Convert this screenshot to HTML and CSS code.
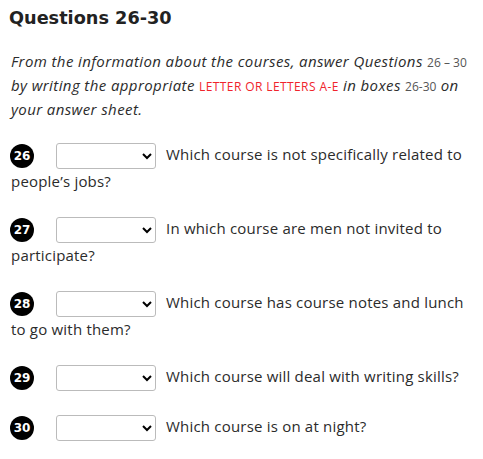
FILE: index.html
```html
<!DOCTYPE html>
<html>
<head>
<meta charset="utf-8">
<link rel="stylesheet" href="styles.css">
</head>
<body>
<h2 class="title">Questions 26-30</h2>
<p class="intro">From the information about the courses, answer Questions <span class="num">26 – 30</span> by writing the appropriate <span class="red">LETTER OR LETTERS A-E</span> in boxes <span class="num">26-30</span> on your answer sheet.</p>
<div class="q"><span class="badge">26</span><select class="sel"><option></option></select>Which course is not specifically related to people’s jobs?</div>
<div class="q"><span class="badge">27</span><select class="sel"><option></option></select>In which course are men not invited to participate?</div>
<div class="q"><span class="badge">28</span><select class="sel"><option></option></select>Which course has course notes and lunch to go with them?</div>
<div class="q"><span class="badge">29</span><select class="sel"><option></option></select>Which course will deal with writing skills?</div>
<div class="q"><span class="badge">30</span><select class="sel"><option></option></select>Which course is on at night?</div>
</body>
</html>
```
FILE: styles.css
```css
body {
  margin: 0;
  padding: 0 6px 0 11px;
  font-family: "Open Sans", sans-serif;
  color: #2b2b2b;
  background: #fff;
}
.title {
  font-family: "DejaVu Sans", sans-serif;
  font-weight: bold;
  font-size: 17.7px;
  margin: 6px 0 0 -2px;
  line-height: 24px;
  color: #222;
}
.intro {
  font-style: italic;
  font-size: 15px;
  letter-spacing: 0.4px;
  line-height: 23px;
  margin: 20px 0 21px;
}
.num {
  font-style: normal;
  font-size: 12px;
  letter-spacing: 0;
  color: #555;
  white-space: nowrap;
}
.red {
  font-style: normal;
  font-size: 12px;
  letter-spacing: 0.4px;
  color: #f0242c;
}
.q {
  font-size: 15px;
  letter-spacing: 0.2px;
  line-height: 24px;
  margin-bottom: 23px;
}
.badge {
  display: inline-block;
  width: 24px;
  height: 24px;
  border-radius: 50%;
  background: #000;
  color: #fff;
  font-family: "DejaVu Sans", sans-serif;
  font-weight: bold;
  font-size: 12px;
  letter-spacing: 0;
  text-align: center;
  line-height: 24px;
  vertical-align: middle;
  margin-left: -1px;
}
.sel {
  width: 100px;
  height: 26px;
  margin: 0 10px 0 22px;
  vertical-align: middle;
  border: 1px solid #bbb;
  border-radius: 3px;
  background: #fff;
}
```
